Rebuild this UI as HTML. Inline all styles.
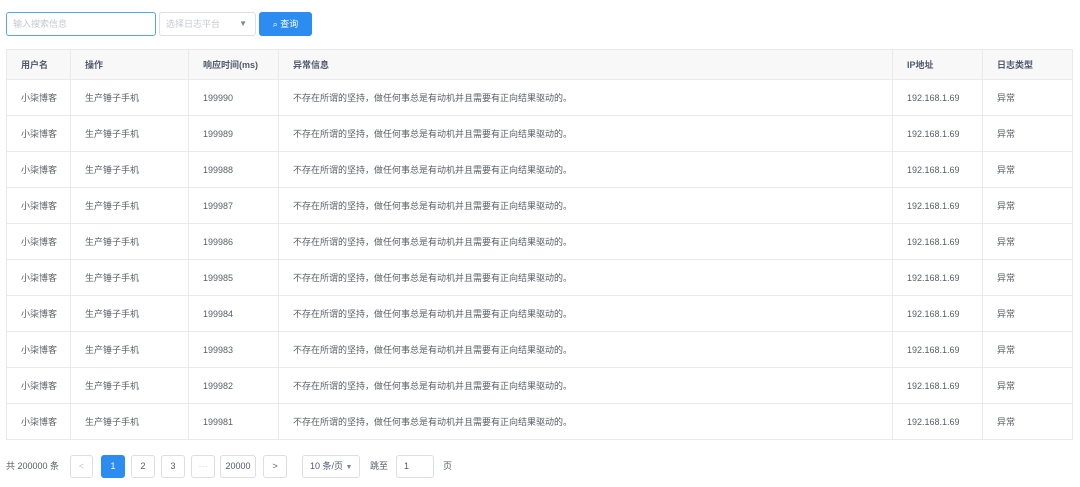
<!DOCTYPE html><html><head><meta charset="utf-8"><style>
body{margin:0;width:1080px;height:487px;background:#fff;font-family:"Liberation Sans","Noto Sans CJK SC",sans-serif;font-size:9px;color:#5a5e66;position:relative;overflow:hidden}
.a{position:absolute;box-sizing:border-box}
table{position:absolute;left:6px;top:49px;width:1066px;border-collapse:collapse;table-layout:fixed}
td,th{border:1px solid #e8eaec;padding:0 0 0 14px;text-align:left;height:35px;white-space:nowrap;overflow:hidden}
th{height:29px;background:#f8f8f9;font-weight:bold;color:#515a6e}
td{border-left:1px solid #e8eaec}
.pb{position:absolute;top:455px;height:23px;border:1px solid #dcdee2;border-radius:3px;box-sizing:border-box;text-align:center;line-height:21px;color:#515a6e;background:#fff}
</style></head><body>
<div class="a" style="left:6px;top:12px;width:150px;height:24px;border:1px solid #57a3f3;border-radius:3px;color:#c5c8ce;padding-left:6px;line-height:22px">输入搜索信息</div>
<div class="a" style="left:159px;top:12px;width:97px;height:24px;border:1px solid #dcdee2;border-radius:3px;color:#c5c8ce;padding-left:6px;line-height:22px">选择日志平台<span style="position:absolute;right:8px;top:0;color:#808695;font-size:8px">▼</span></div>
<div class="a" style="left:259px;top:12px;width:53px;height:24px;background:#2d8cf0;border-radius:3px;color:#fff;line-height:24px;text-align:center">&#x2315; 查询</div>
<table><colgroup><col style="width:64px"><col style="width:118px"><col style="width:90px"><col style="width:614px"><col style="width:90px"><col style="width:90px"></colgroup>
<tr><th>用户名</th><th>操作</th><th>响应时间(ms)</th><th>异常信息</th><th>IP地址</th><th>日志类型</th></tr>
<tr><td>小柒博客</td><td>生产锤子手机</td><td>199990</td><td>不存在所谓的坚持，做任何事总是有动机并且需要有正向结果驱动的。</td><td>192.168.1.69</td><td>异常</td></tr>
<tr><td>小柒博客</td><td>生产锤子手机</td><td>199989</td><td>不存在所谓的坚持，做任何事总是有动机并且需要有正向结果驱动的。</td><td>192.168.1.69</td><td>异常</td></tr>
<tr><td>小柒博客</td><td>生产锤子手机</td><td>199988</td><td>不存在所谓的坚持，做任何事总是有动机并且需要有正向结果驱动的。</td><td>192.168.1.69</td><td>异常</td></tr>
<tr><td>小柒博客</td><td>生产锤子手机</td><td>199987</td><td>不存在所谓的坚持，做任何事总是有动机并且需要有正向结果驱动的。</td><td>192.168.1.69</td><td>异常</td></tr>
<tr><td>小柒博客</td><td>生产锤子手机</td><td>199986</td><td>不存在所谓的坚持，做任何事总是有动机并且需要有正向结果驱动的。</td><td>192.168.1.69</td><td>异常</td></tr>
<tr><td>小柒博客</td><td>生产锤子手机</td><td>199985</td><td>不存在所谓的坚持，做任何事总是有动机并且需要有正向结果驱动的。</td><td>192.168.1.69</td><td>异常</td></tr>
<tr><td>小柒博客</td><td>生产锤子手机</td><td>199984</td><td>不存在所谓的坚持，做任何事总是有动机并且需要有正向结果驱动的。</td><td>192.168.1.69</td><td>异常</td></tr>
<tr><td>小柒博客</td><td>生产锤子手机</td><td>199983</td><td>不存在所谓的坚持，做任何事总是有动机并且需要有正向结果驱动的。</td><td>192.168.1.69</td><td>异常</td></tr>
<tr><td>小柒博客</td><td>生产锤子手机</td><td>199982</td><td>不存在所谓的坚持，做任何事总是有动机并且需要有正向结果驱动的。</td><td>192.168.1.69</td><td>异常</td></tr>
<tr><td>小柒博客</td><td>生产锤子手机</td><td>199981</td><td>不存在所谓的坚持，做任何事总是有动机并且需要有正向结果驱动的。</td><td>192.168.1.69</td><td>异常</td></tr>
</table>
<div class="a" style="left:6px;top:455px;line-height:23px">共 200000 条</div>
<div class="pb" style="left:70px;width:23px;color:#c5c8ce">&lt;</div>
<div class="pb" style="left:101px;width:24px;background:#2d8cf0;border-color:#2d8cf0;color:#fff">1</div>
<div class="pb" style="left:131px;width:24px">2</div>
<div class="pb" style="left:161px;width:24px">3</div>
<div class="pb" style="left:191px;width:24px;color:#c5c8ce">···</div>
<div class="pb" style="left:220px;width:36px">20000</div>
<div class="pb" style="left:263px;width:24px">&gt;</div>
<div class="pb" style="left:302px;width:58px;text-align:left;padding-left:7px">10 条/页 <span style="font-size:7px;color:#808695">▼</span></div>
<div class="a" style="left:370px;top:455px;line-height:23px">跳至</div>
<div class="pb" style="left:396px;width:38px;text-align:left;padding-left:7px">1</div>
<div class="a" style="left:443px;top:455px;line-height:23px">页</div>
</body></html>
